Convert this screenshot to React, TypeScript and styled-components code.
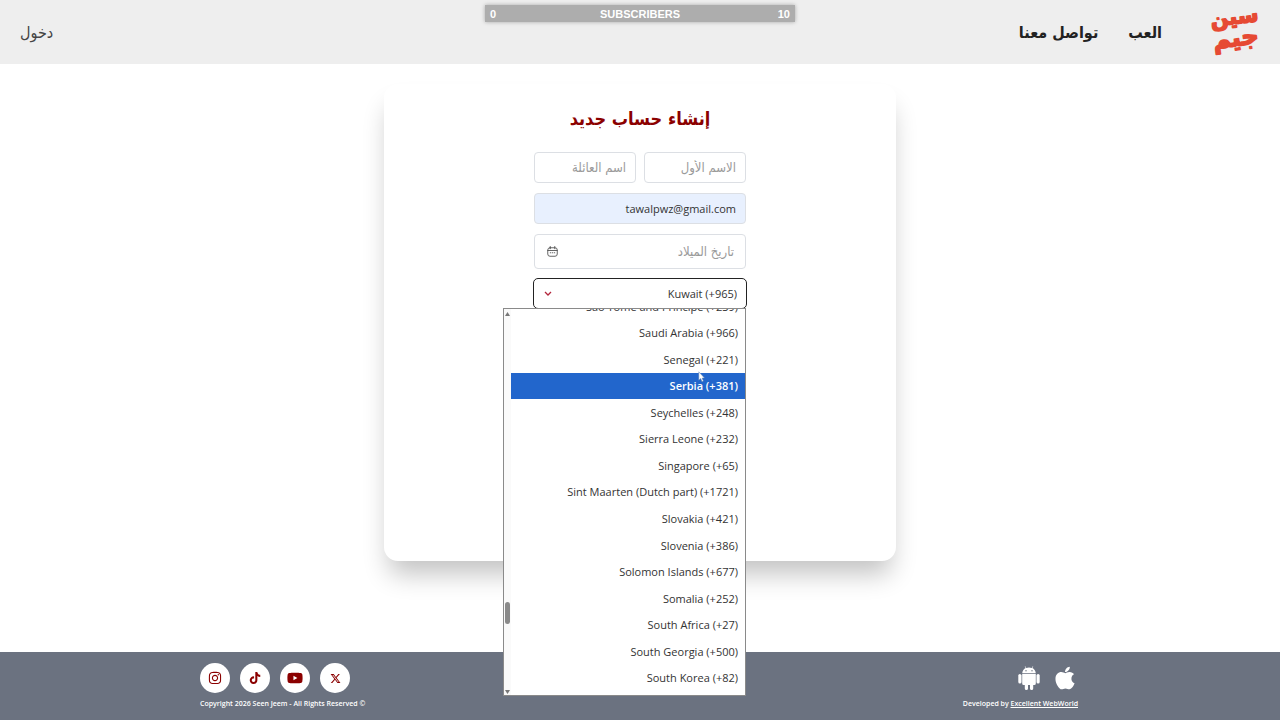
import React from 'react';
import styled, { createGlobalStyle } from 'styled-components';
import { FaApple, FaTiktok, FaYoutube, FaXTwitter, FaInstagram } from 'react-icons/fa6';

const latin = "'Open Sans', 'DejaVu Sans Condensed', sans-serif";
const arabic = "'DejaVu Sans Condensed', 'DejaVu Sans', sans-serif";

const GlobalStyle = createGlobalStyle`
  *, *::before, *::after { box-sizing: border-box; }
  body { margin: 0; background: #fff; color: #333; font-family: ${arabic}; }
  a { color: inherit; text-decoration: none; }
`;

const Page = styled.div`
  display: flex;
  flex-direction: column;
  min-height: 100vh;
  position: relative;
`;

const Header = styled.header`
  display: flex;
  align-items: center;
  justify-content: space-between;
  height: 64px;
  padding: 0 20px;
  background: #eee;
`;

const Nav = styled.nav`
  display: flex;
  align-items: center;
  gap: 30px;
  font-size: 16px;
  font-weight: 700;
  color: #222;
`;

const LogoLink = styled.a`
  display: flex;
  margin-inline-end: 18px;
`;

const LoginLink = styled.a`
  font-size: 16px;
  color: #444;
`;

const SubscriberBar = styled.div`
  position: absolute;
  top: 5px;
  left: 50%;
  width: 310px;
  height: 17px;
  transform: translateX(-50%);
  display: flex;
  align-items: center;
  justify-content: space-between;
  padding: 0 5px;
  background: #adadad;
  box-shadow: 0 0 4px rgba(0, 0, 0, 0.3);
  color: #fff;
  font: 700 11px 'Liberation Sans', sans-serif;
`;

const SubscriberLabel = styled.span`
  flex: 1;
  text-align: center;
`;

const SubscriberCount = styled.span<{ $end?: boolean }>`
  width: 14px;
  text-align: ${(p) => (p.$end ? 'right' : 'left')};
`;

const Main = styled.main`
  flex: 1;
  display: flex;
  justify-content: center;
  padding: 20px 0 91px;
`;

const Card = styled.section`
  width: 40%;
  border-radius: 14px;
  background: #fff;
  box-shadow: 0 18px 26px -5px rgba(0, 0, 0, 0.24);
  display: flex;
  flex-direction: column;
  align-items: center;
`;

const Title = styled.h1`
  margin: 21px 0 20px;
  font-size: 18px;
  line-height: 27px;
  color: #8b0000;
`;

const Form = styled.form`
  display: grid;
  grid-template-columns: 1fr 1fr;
  gap: 10px 8px;
  width: 212px;
`;

const TextField = styled.input<{ $wide?: boolean; $filled?: boolean }>`
  grid-column: ${(p) => (p.$wide ? '1 / -1' : 'auto')};
  width: 100%;
  min-width: 0;
  height: 31px;
  padding: 0 9px;
  border: 1px solid #dcdfe4;
  border-radius: 4px;
  background: ${(p) => (p.$filled ? '#e8f0fe' : '#fff')};
  color: #333;
  font: 11px ${latin};
  text-align: right;
  &::placeholder {
    color: #9a9a9a;
    font: 13px ${arabic};
  }
`;

const DateField = styled.label`
  grid-column: 1 / -1;
  display: flex;
  align-items: center;
  height: 35px;
  padding: 0 11px 0 12px;
  border: 1px solid #dcdfe4;
  border-radius: 4px;
`;

const DateInput = styled.input`
  flex: 1;
  min-width: 0;
  padding: 0;
  border: 0;
  outline: 0;
  font: 13px ${arabic};
  &::placeholder { color: #9a9a9a; }
`;

const CountryField = styled.div`
  grid-column: 1 / -1;
  position: relative;
  display: flex;
  align-items: center;
`;

const CountrySelect = styled.select`
  appearance: none;
  width: 100%;
  height: 29px;
  padding: 0 8px;
  border: 1px solid #fff;
  outline: 1px solid #222;
  border-radius: 4px;
  background: #fff;
  color: #333;
  font: 11px ${latin};
  text-align: right;
  text-align-last: right;
`;

const SelectChevron = styled.svg`
  position: absolute;
  left: 10px;
  pointer-events: none;
`;

const Popup = styled.div`
  position: absolute;
  top: 100%;
  right: 0;
  z-index: 2;
  display: flex;
  width: 243px;
  height: 388px;
  border: 1px solid #8a8a8a;
  background: #fff;
  overflow: hidden;
`;

const ScrollTrack = styled.div`
  flex: 0 0 7px;
  display: flex;
  flex-direction: column;
  align-items: center;
  justify-content: space-between;
  padding: 3px 0 1px;
  background: #fafafa;
`;

const ScrollThumb = styled.div`
  width: 5px;
  height: 22px;
  margin: 286px 0 auto;
  border-radius: 3px;
  background: #8a8a8a;
`;

const OptionList = styled.ul`
  flex: 1;
  display: flex;
  flex-direction: column;
  height: 398px;
  margin: -16px 0 0;
  padding: 0;
  list-style: none;
`;

const Option = styled.li<{ $active: boolean }>`
  flex: 1;
  position: relative;
  display: flex;
  align-items: center;
  padding: 0 7px;
  background: ${(p) => (p.$active ? '#2266cc' : 'transparent')};
  color: ${(p) => (p.$active ? '#fff' : '#333')};
  font: ${(p) => (p.$active ? 600 : 400)} 11px ${latin};
  white-space: nowrap;
`;

const Pointer = styled.svg`
  position: absolute;
  top: -2px;
  right: 40px;
`;

const Footer = styled.footer`
  display: flex;
  justify-content: space-between;
  height: 68px;
  padding: 11px 202px 0 200px;
  background: #6b7280;
  color: #fff;
  font: 600 7px ${latin};
`;

const FooterColumn = styled.div<{ $end?: boolean }>`
  display: flex;
  flex-direction: column;
  align-items: ${(p) => (p.$end ? 'flex-end' : 'flex-start')};
  gap: 6px;
`;

const IconRow = styled.div<{ $gap: number }>`
  display: flex;
  align-items: center;
  gap: ${(p) => p.$gap}px;
  height: 30px;
`;

const SocialLink = styled.a`
  display: flex;
  align-items: center;
  justify-content: center;
  width: 30px;
  height: 30px;
  border-radius: 50%;
  background: #fff;
  color: #8b0000;
`;

const StoreLink = styled.a`
  display: flex;
`;

const FootNote = styled.p`
  margin: 0;
  line-height: 10px;
  a { text-decoration: underline; }
`;

const countries = [
  'Sao Tome and Principe (+239)',
  'Saudi Arabia (+966)',
  'Senegal (+221)',
  'Serbia (+381)',
  'Seychelles (+248)',
  'Sierra Leone (+232)',
  'Singapore (+65)',
  'Sint Maarten (Dutch part) (+1721)',
  'Slovakia (+421)',
  'Slovenia (+386)',
  'Solomon Islands (+677)',
  'Somalia (+252)',
  'South Africa (+27)',
  'South Georgia (+500)',
  'South Korea (+82)',
];

const Logo = () => (
  <svg width="50" height="60" viewBox="0 0 50 60" role="img" aria-label="سين جيم">
    <g
      fill="#e64a33"
      stroke="#e64a33"
      strokeWidth="1.6"
      strokeLinejoin="round"
      textAnchor="middle"
      fontFamily="DejaVu Sans"
      fontWeight="700"
      transform="rotate(-7 25 30)"
    >
      <text x="26" y="22" fontSize="21">سين</text>
      <text x="25" y="44" fontSize="24">جيم</text>
    </g>
  </svg>
);

const CalendarIcon = () => (
  <svg width="11" height="11" viewBox="0 0 22 22" fill="none" stroke="#555" strokeWidth="1.8" strokeLinecap="round">
    <rect x="1.5" y="3.5" width="19" height="17" rx="4.5" />
    <path d="M6.5 1v4.5M15.500 1v4.500M1.500 9h19M6.500 13.500h1M10.500 13.500h1M14.500 13.500h1" />
  </svg>
);

const ScrollArrow = ({ down = false }: { down?: boolean }) => (
  <svg width="5" height="4" viewBox="0 0 5 4" fill="#777">
    <path d={down ? 'M0 0h5L2.500 4z' : 'M0 4h5L2.500 0z'} />
  </svg>
);

const AndroidIcon = () => (
  <svg width="22" height="24" viewBox="0 0 22 24" fill="#fff">
    <path d="M4.200 7.300C4.400 4.700 5.900 3 7.700 2.100L6.700.5l.5-.3 1.100 1.700a8 8 0 0 1 5.400 0L14.800.2l.5.3-1 1.600c1.800.9 3.300 2.600 3.500 5.200z" />
    <path d="M4.200 8h13.600v9.500a1.500 1.500 0 0 1-1.500 1.500h-1.100v3.400a1.600 1.600 0 0 1-3.200 0V19h-2v3.400a1.600 1.600 0 0 1-3.200 0V19H5.700a1.500 1.500 0 0 1-1.500-1.500z" />
    <rect x="0.300" y="8" width="3.200" height="9.500" rx="1.600" />
    <rect x="18.500" y="8" width="3.200" height="9.500" rx="1.600" />
    <circle cx="8" cy="4.800" r=".7" fill="#6b7280" />
    <circle cx="14" cy="4.800" r=".7" fill="#6b7280" />
  </svg>
);

export default function App() {
  return (
    <Page dir="rtl" lang="ar">
      <GlobalStyle />
      <Header>
        <Nav>
          <LogoLink href="#home"><Logo /></LogoLink>
          <a href="#play">العب</a>
          <a href="#contact">تواصل معنا</a>
        </Nav>
        <LoginLink href="#login">دخول</LoginLink>
      </Header>
      <SubscriberBar dir="ltr">
        <SubscriberCount>0</SubscriberCount>
        <SubscriberLabel>SUBSCRIBERS</SubscriberLabel>
        <SubscriberCount $end>10</SubscriberCount>
      </SubscriberBar>

      <Main>
        <Card>
          <Title>إنشاء حساب جديد</Title>
          <Form>
            <TextField aria-label="الاسم الأول" placeholder="الاسم الأول" />
            <TextField aria-label="اسم العائلة" placeholder="اسم العائلة" />
            <TextField $wide $filled type="email" aria-label="البريد الإلكتروني" defaultValue="tawalpwz@gmail.com" />
            <DateField>
              <DateInput aria-label="تاريخ الميلاد" placeholder="تاريخ الميلاد" />
              <CalendarIcon />
            </DateField>
            <CountryField>
              <CountrySelect dir="ltr" aria-label="رمز الدولة" defaultValue="kw">
                <option value="kw">Kuwait (+965)</option>
              </CountrySelect>
              <SelectChevron width="8" height="6" viewBox="0 0 8 6" fill="none" stroke="#b3263c" strokeWidth="1.300">
                <path d="M1 1l3 3 3-3" />
              </SelectChevron>
              <Popup>
                <OptionList role="listbox" aria-label="رمز الدولة">
                  {countries.map((name) => {
                    const active = name.startsWith('Serbia');
                    return (
                      <Option key={name} role="option" aria-selected={active} $active={active}>
                        <bdi dir="ltr">{name}</bdi>
                        {active && (
                          <Pointer width="7" height="12" viewBox="0 0 7 12">
                            <path d="M.8.8v8.400l1.900-1.700 1.300 3.200 1.400-.6-1.300-3h2.400z" fill="#fff" stroke="#5d7fae" strokeWidth=".5" />
                          </Pointer>
                        )}
                      </Option>
                    );
                  })}
                </OptionList>
                <ScrollTrack>
                  <ScrollArrow />
                  <ScrollThumb />
                  <ScrollArrow down />
                </ScrollTrack>
              </Popup>
            </CountryField>
          </Form>
        </Card>
      </Main>

      <Footer dir="ltr">
        <FooterColumn>
          <IconRow $gap={10}>
            <SocialLink href="#instagram" aria-label="Instagram"><FaInstagram size={14} /></SocialLink>
            <SocialLink href="#tiktok" aria-label="TikTok"><FaTiktok size={12} /></SocialLink>
            <SocialLink href="#youtube" aria-label="YouTube"><FaYoutube size={16} /></SocialLink>
            <SocialLink href="#x" aria-label="X"><FaXTwitter size={11} /></SocialLink>
          </IconRow>
          <FootNote>Copyright 2026 Seen Jeem - All Rights Reserved ©</FootNote>
        </FooterColumn>
        <FooterColumn $end>
          <IconRow $gap={12}>
            <StoreLink href="#android" aria-label="Android"><AndroidIcon /></StoreLink>
            <StoreLink href="#ios" aria-label="iOS"><FaApple size={26} /></StoreLink>
          </IconRow>
          <FootNote>Developed by <a href="#developer">Excellent WebWorld</a></FootNote>
        </FooterColumn>
      </Footer>
    </Page>
  );
}
